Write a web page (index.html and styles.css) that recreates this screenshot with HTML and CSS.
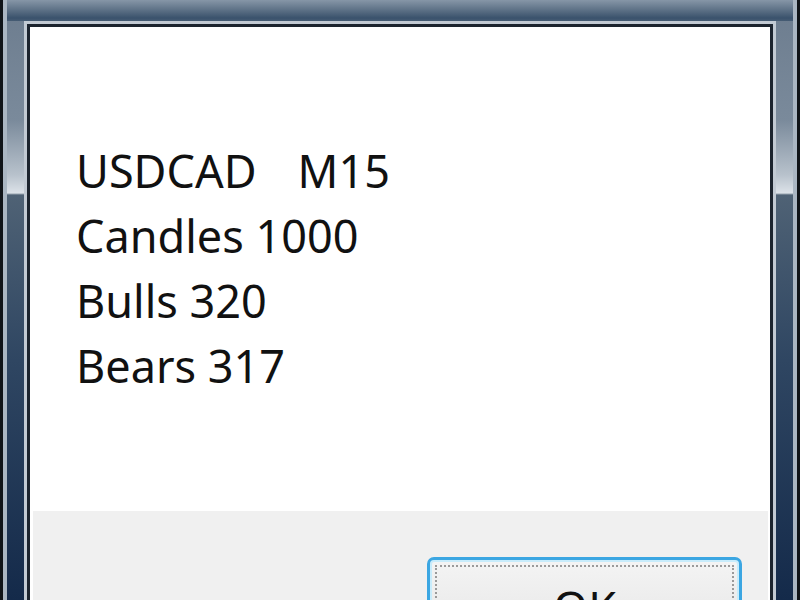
FILE: index.html
```html
<!DOCTYPE html>
<html lang="en">
<head>
    <meta charset="UTF-8">
    <title>USDCAD M15</title>
    <link rel="stylesheet" href="styles.css">
</head>
<body>
    <div class="frame">
        <div class="client">
            <div class="message">
                <p class="line pre">USDCAD   M15</p>
                <p class="line">Candles 1000</p>
                <p class="line">Bulls 320</p>
                <p class="line">Bears 317</p>
            </div>
            <div class="footer">
                <button class="btn">OK</button>
            </div>
        </div>
    </div>
</body>
</html>
```

FILE: styles.css
```css
*{
    margin: 0;
    padding: 0;
    box-sizing: border-box;
}
body{
    width: 800px;
    height: 600px;
    overflow: hidden;
    background: #111;
    font-family: "Noto Sans", "Open Sans", sans-serif;
}
.frame{
    width: 800px;
    height: 600px;
    padding: 24px 27px 0 27px;
    display: flex;
    background:
        linear-gradient(to right, #101418 0 3px, #aab6c2 3px 7px, transparent 7px 793px, #aab6c2 793px 797px, #101418 797px),
        linear-gradient(to bottom, #8696a7 0, #5d7186 10px, #3a526c 18px, #465c74 21px) 0 0 / 100% 21px no-repeat,
        linear-gradient(to bottom, #6c7c8e 0, #7a8a9b 120px, #b8c2cc 175px, #dce2e8 193px, #4f6275 195px, #2f4662 360px, #142a4a 600px);
}
.client{
    flex: 1;
    display: flex;
    flex-direction: column;
    overflow: hidden;
    background: #fff;
    border: 3px solid #1c242e;
    border-bottom: none;
    box-shadow: 0 0 0 3px #c2cad3;
}
.message{
    height: 484px;
    flex-shrink: 0;
    padding: 111px 0 0 46px;
}
.line{
    font-size: 45px;
    line-height: 65px;
    color: #111;
}
.pre{
    white-space: pre;
    word-spacing: 2px;
}
.footer{
    flex: 1;
    min-height: 0;
    margin: 0 2px 0 3px;
    background: #f0f0f0;
    display: flex;
    justify-content: flex-end;
    align-items: flex-start;
    padding: 46px 26px 0 0;
}
.btn{
    position: relative;
    width: 315px;
    height: 100px;
    flex-shrink: 0;
    border: 3px solid #3ba6e2;
    border-radius: 7px;
    background: linear-gradient(to bottom, #f4f4f4 0, #ececec 48%, #dcdcdc 52%, #d0d0d0 100%);
    box-shadow: inset 0 0 0 2px #c8ecfb;
    font-family: "Noto Sans", "Open Sans", sans-serif;
    font-size: 45px;
    color: #111;
}
.btn::after{
    content: "";
    position: absolute;
    top: 5px;
    left: 5px;
    right: 5px;
    bottom: 5px;
    border: 2px dotted #9a9a9a;
}
```
